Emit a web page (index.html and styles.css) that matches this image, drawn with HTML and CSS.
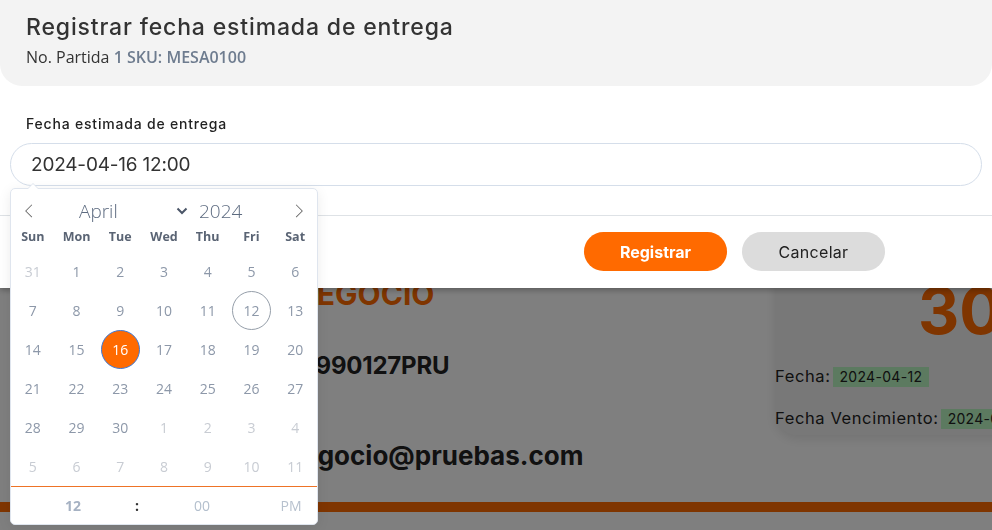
FILE: index.html
```html
<!DOCTYPE html>
<html lang="es">
<head>
  <meta charset="UTF-8" />
  <meta name="viewport" content="width=device-width, initial-scale=1" />
  <title>Registrar fecha estimada de entrega</title>
  <link rel="stylesheet" href="styles.css">
</head>
<body>
  <!-- pagina de fondo (detras del modal) -->
  <div class="page">
    <div class="biz">
      <div class="biz-info">
        <h1 class="biz-name">NEGOCIO</h1>
        <p class="biz-rfc">X990127PRU</p>
        <p class="biz-mail">negocio@pruebas.com</p>
      </div>
      <div class="doc-card">
        <div class="doc-number">300</div>
        <p class="doc-line">Fecha:<span class="tag">2024-04-12</span></p>
        <p class="doc-line">Fecha Vencimiento:<span class="tag">2024-05-12</span></p>
      </div>
    </div>
    <div class="page-bar"></div>
  </div>

  <div class="backdrop"></div>

  <div class="modal">
    <div class="modal-header">
      <h2 class="modal-title">Registrar fecha estimada de entrega</h2>
      <p class="modal-sub">No. Partida <span class="sub-accent">1 SKU: MESA0100</span></p>
    </div>
    <div class="modal-body">
      <label class="field-label" for="fecha">Fecha estimada de entrega</label>
      <input class="field-input" id="fecha" type="text" value="2024-04-16 12:00" readonly>
    </div>
    <div class="modal-footer">
      <button class="btn btn-primary">Registrar</button>
      <button class="btn btn-secondary">Cancelar</button>
    </div>
  </div>

  <div class="calendar">
    <div class="cal-months">
      <span class="cal-nav">
        <svg width="14" height="14" viewBox="0 0 17 17"><path d="M5.207 8.471l7.146 7.147-0.707 0.707-7.853-7.854 7.854-7.853 0.707 0.707-7.147 7.146z"/></svg>
      </span>
      <span class="cal-month">April
        <svg class="cal-chevron" width="12" height="8" viewBox="0 0 12 8"><path d="M1.5 1.5l4.5 4.5 4.5-4.5" fill="none" stroke="#4b5668" stroke-width="2"/></svg>
      </span>
      <span class="cal-year">2024</span>
      <span class="cal-nav cal-next">
        <svg width="14" height="14" viewBox="0 0 17 17"><path d="M13.207 8.472l-7.854 7.854-0.707-0.707 7.146-7.146-7.146-7.148 0.707-0.707 7.854 7.854z"/></svg>
      </span>
    </div>

    <div class="cal-weekdays">
      <span>Sun</span><span>Mon</span><span>Tue</span><span>Wed</span><span>Thu</span><span>Fri</span><span>Sat</span>
    </div>

    <div class="cal-days">
      <span class="day other"><i>31</i></span>
      <span class="day"><i>1</i></span>
      <span class="day"><i>2</i></span>
      <span class="day"><i>3</i></span>
      <span class="day"><i>4</i></span>
      <span class="day"><i>5</i></span>
      <span class="day"><i>6</i></span>

      <span class="day"><i>7</i></span>
      <span class="day"><i>8</i></span>
      <span class="day"><i>9</i></span>
      <span class="day"><i>10</i></span>
      <span class="day"><i>11</i></span>
      <span class="day today"><i>12</i></span>
      <span class="day"><i>13</i></span>

      <span class="day"><i>14</i></span>
      <span class="day"><i>15</i></span>
      <span class="day selected"><i>16</i></span>
      <span class="day"><i>17</i></span>
      <span class="day"><i>18</i></span>
      <span class="day"><i>19</i></span>
      <span class="day"><i>20</i></span>

      <span class="day"><i>21</i></span>
      <span class="day"><i>22</i></span>
      <span class="day"><i>23</i></span>
      <span class="day"><i>24</i></span>
      <span class="day"><i>25</i></span>
      <span class="day"><i>26</i></span>
      <span class="day"><i>27</i></span>

      <span class="day"><i>28</i></span>
      <span class="day"><i>29</i></span>
      <span class="day"><i>30</i></span>
      <span class="day other"><i>1</i></span>
      <span class="day other"><i>2</i></span>
      <span class="day other"><i>3</i></span>
      <span class="day other"><i>4</i></span>

      <span class="day other"><i>5</i></span>
      <span class="day other"><i>6</i></span>
      <span class="day other"><i>7</i></span>
      <span class="day other"><i>8</i></span>
      <span class="day other"><i>9</i></span>
      <span class="day other"><i>10</i></span>
      <span class="day other"><i>11</i></span>
    </div>

    <div class="cal-time">
      <span class="time-hour">12</span>
      <span class="time-sep">:</span>
      <span class="time-min">00</span>
      <span class="time-ampm">PM</span>
    </div>
  </div>
</body>
</html>
```

FILE: styles.css
```css
* {
  box-sizing: border-box;
}

body {
  margin: 0;
  width: 992px;
  height: 530px;
  overflow: hidden;
  position: relative;
  background: #fff;
  font-family: 'Inter', 'Liberation Sans', sans-serif;
  color: #333;
}

/* ---------- pagina de fondo ---------- */

.page {
  width: 1040px;
  padding-top: 272px;
}

.biz {
  display: flex;
  align-items: flex-start;
}

.biz-info {
  width: 775px;
  padding: 2px 0 0 294px;
}

.biz-name {
  margin: 0;
  font-size: 30px;
  line-height: 40px;
  font-weight: 700;
  color: #ff6a00;
}

.biz-rfc,
.biz-mail {
  margin: 34px 0 0;
  font-size: 26px;
  line-height: 36px;
  font-weight: 700;
  color: #222;
}

.biz-rfc {
  margin-left: 4px;
  font-size: 24px;
  letter-spacing: -0.2px;
}

.biz-mail {
  margin-top: 54px;
  margin-left: -8px;
}

.doc-card {
  width: 265px;
  background: #f1f1f1;
  border-radius: 0 0 0 22px;
  padding: 8px 0 5px;
  box-shadow: 0 4px 12px rgba(0, 0, 0, 0.1);
}

.doc-number {
  padding-left: 143px;
  font-size: 64px;
  line-height: 62px;
  font-weight: 700;
  color: #ff6a00;
}

.doc-line {
  margin: 22px 0 0;
  font-size: 16.5px;
  line-height: 24px;
  letter-spacing: 0.6px;
  color: #222;
}

.doc-line + .doc-line {
  margin-top: 18px;
}

.tag {
  display: inline-block;
  margin-left: 2px;
  padding: 0 7px;
  background: #b8f5c0;
  font-size: 14px;
  line-height: 20px;
  letter-spacing: 0.3px;
}

.page-bar {
  height: 10px;
  margin-top: 28px;
  background: #ff6a00;
}

.backdrop {
  position: fixed;
  inset: 0;
  background: rgba(0, 0, 0, 0.5);
}

/* ---------- modal ---------- */

.modal {
  position: fixed;
  top: 0;
  left: 0;
  width: 992px;
  background: #fff;
  box-shadow: 0 2px 6px rgba(0, 0, 0, 0.3);
}

.modal-header {
  height: 86px;
  padding: 12px 26px 0;
  background: #f3f3f3;
  border-radius: 0 0 22px 22px;
}

.modal-title {
  margin: 0;
  font-size: 23px;
  line-height: 30px;
  font-weight: 500;
  letter-spacing: 0.85px;
  color: #333;
}

.modal-sub {
  margin: 4px 0 0;
  font-family: 'Open Sans', sans-serif;
  font-size: 16px;
  line-height: 22px;
  color: #333;
}

.sub-accent {
  color: #6e7c8f;
  font-weight: 600;
}

.modal-body {
  padding: 28px 10px 29px;
}

.field-label {
  display: block;
  padding-left: 16px;
  margin-bottom: 9px;
  font-size: 14px;
  line-height: 20px;
  font-weight: 500;
  letter-spacing: 0.8px;
  color: #222;
}

.field-input {
  display: block;
  width: 100%;
  height: 43px;
  padding: 0 20px;
  border: 1px solid #d5deea;
  border-radius: 22px;
  background: #fff;
  font-family: 'Inter', sans-serif;
  font-size: 19px;
  letter-spacing: -0.2px;
  color: #333;
  outline: none;
}

.modal-footer {
  display: flex;
  justify-content: flex-end;
  gap: 15px;
  padding: 16px 107px 17px 0;
  border-top: 1px solid #dee2e6;
}

.btn {
  width: 143px;
  height: 39px;
  border: none;
  border-radius: 20px;
  font-family: 'Inter', sans-serif;
  font-size: 16px;
}

.btn-primary {
  background: #ff6a00;
  color: #fff;
  font-weight: 700;
}

.btn-secondary {
  background: #dcdcdc;
  color: #222;
  letter-spacing: 0.3px;
}

/* ---------- calendario ---------- */

.calendar {
  position: absolute;
  left: 10px;
  top: 188px;
  width: 308px;
  background: #fff;
  border: 1px solid #dfe5ee;
  border-radius: 5px;
  box-shadow: 0 3px 13px rgba(0, 0, 0, 0.08);
  font-family: 'Open Sans', sans-serif;
}

.calendar::before,
.calendar::after {
  content: '';
  position: absolute;
  border: solid transparent;
  height: 0;
  width: 0;
}

.calendar::before {
  left: 16px;
  top: -12px;
  border-width: 6px;
  border-bottom-color: #dfe5ee;
}

.calendar::after {
  left: 17px;
  top: -10px;
  border-width: 5px;
  border-bottom-color: #fff;
}

.cal-months {
  display: flex;
  align-items: center;
  height: 34px;
  margin-top: 5px;
  color: #5d6b80;
  font-size: 19px;
  font-weight: 300;
}

.cal-nav {
  width: 36px;
  display: flex;
  justify-content: center;
  fill: #666;
}

.cal-next {
  margin-left: auto;
}

.cal-month {
  width: 149px;
  display: flex;
  align-items: center;
  padding-left: 32px;
}

.cal-chevron {
  margin-left: auto;
  margin-right: 8px;
}

.cal-year {
  padding-left: 3px;
}

.cal-weekdays {
  display: grid;
  grid-template-columns: repeat(7, 1fr);
  height: 16px;
  margin-top: 1px;
  text-align: center;
  font-size: 12.5px;
  line-height: 16px;
  font-weight: 700;
  color: #5a6474;
}

.cal-days {
  display: grid;
  grid-template-columns: repeat(7, 1fr);
  margin-top: 7px;
}

.day {
  height: 39px;
  display: flex;
  justify-content: center;
  align-items: center;
  font-size: 14px;
  color: #8d98a9;
}

.day i {
  font-style: normal;
  width: 39px;
  height: 39px;
  display: flex;
  justify-content: center;
  align-items: center;
  border: 1px solid transparent;
  border-radius: 50%;
}

.day.other {
  color: #c8ccd3;
}

.day.today i {
  border-color: #959ea9;
}

.day.selected i {
  background: #ff6a00;
  border-color: #3f7ad6;
  color: #fff;
}

.cal-time {
  display: grid;
  grid-template-columns: 124px 4px 126px 1fr;
  align-items: center;
  height: 38px;
  border-top: 1px solid #ee7326;
  text-align: center;
  font-size: 14px;
}

.time-hour {
  font-weight: 700;
  color: #a6b2c3;
}

.time-sep {
  font-weight: 700;
  color: #333;
}

.time-min {
  color: #b3bfcd;
}

.time-ampm {
  color: #b7c1ce;
}
```
